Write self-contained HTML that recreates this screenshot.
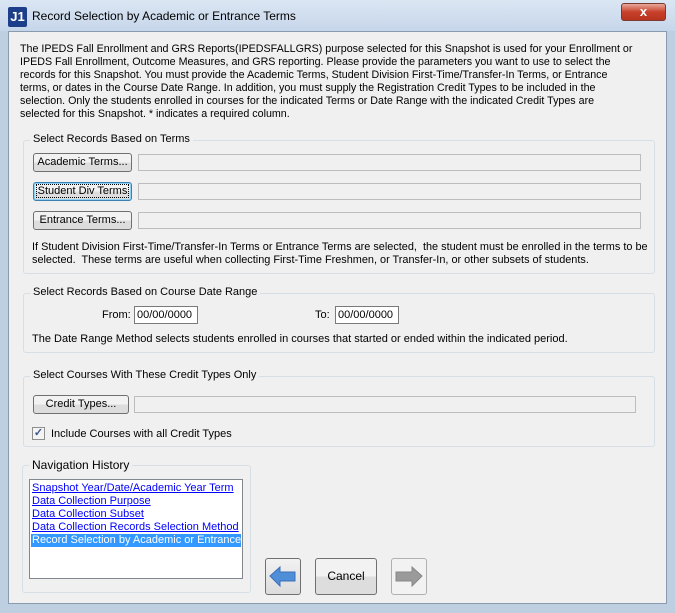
<!DOCTYPE html>
<html><head><style>
*{margin:0;padding:0;box-sizing:border-box}
body{width:675px;height:613px;background:#bfcfe2;font-family:"Liberation Sans",sans-serif;font-size:11px;color:#000;position:relative;overflow:hidden}
.abs{position:absolute}
.title{left:0;top:0;width:675px;height:31px;background:linear-gradient(#dbe6f3,#c6d6ea)}
.client{left:8px;top:31px;width:659px;height:573px;background:#f0f0f0;border:1px solid #8a9bb0}
.grp{position:absolute;border:1px solid #d5dfe5;border-radius:3px}
.grp .lg{position:absolute;top:-8px;left:6px;background:#f0f0f0;padding:0 3px;font-size:11px}
.btn{position:absolute;height:19px;border:1px solid #707070;border-radius:3px;background:linear-gradient(#f2f2f2 50%,#dddddd 50%);text-align:center;line-height:17px;font-size:11px}
.fld{position:absolute;height:17px;border:1px solid #bdbdbd;background:#f0f0f0}
.inp{position:absolute;height:18px;border:1px solid #7a7a7a;background:#fff;line-height:16px;padding-left:2px}
.t{position:absolute;white-space:nowrap;line-height:13px}
a{color:#0000ff;text-decoration:underline}
</style></head><body>
<div class="abs title"></div>
<div class="abs" style="left:8px;top:7px;width:19px;height:20px;background:#1d3f8a;border-radius:2px;color:#fff;font-weight:bold;font-size:13px;line-height:20px;text-align:center">J1</div>
<div class="t" style="left:32px;top:10px;font-size:12px">Record Selection by Academic or Entrance Terms</div>
<div class="abs" style="left:621px;top:3px;width:45px;height:18px;border:1px solid #7a3a30;border-radius:3px;background:linear-gradient(#e9a99b,#c7402a 50%,#b8341f);color:#fff;font-weight:bold;text-align:center;line-height:15px;font-size:13px">x</div>
<div class="abs client"></div>
<div class="t" style="left:20px;top:43px;font-size:10.7px">The IPEDS Fall Enrollment and GRS Reports(IPEDSFALLGRS) purpose selected for this Snapshot is used for your Enrollment or<br>IPEDS Fall Enrollment, Outcome Measures, and GRS reporting. Please provide the parameters you want to use to select the<br>records for this Snapshot. You must provide the Academic Terms, Student Division First-Time/Transfer-In Terms, or Entrance<br>terms, or dates in the Course Date Range. In addition, you must supply the Registration Credit Types to be included in the<br>selection. Only the students enrolled in courses for the indicated Terms or Date Range with the indicated Credit Types are<br>selected for this Snapshot. * indicates a required column.</div>

<div class="grp" style="left:23px;top:140px;width:632px;height:134px"><span class="lg">Select Records Based on Terms</span></div>
<div class="btn" style="left:33px;top:153px;width:99px">Academic Terms...</div>
<div class="fld" style="left:138px;top:154px;width:503px"></div>
<div class="btn" style="left:33px;top:182px;width:99px;border-color:#3c7fb1;box-shadow:inset 0 0 0 1px #8fd0f5"><span style="border:1px dotted #000;padding:0 1px">Student Div Terms</span></div>
<div class="fld" style="left:138px;top:183px;width:503px"></div>
<div class="btn" style="left:33px;top:211px;width:99px">Entrance Terms...</div>
<div class="fld" style="left:138px;top:212px;width:503px"></div>
<div class="t" style="left:32px;top:241px;font-size:10.9px">If Student Division First-Time/Transfer-In Terms or Entrance Terms are selected,&nbsp; the student must be enrolled in the terms to be<br>selected.&nbsp; These terms are useful when collecting First-Time Freshmen, or Transfer-In, or other subsets of students.</div>

<div class="grp" style="left:23px;top:293px;width:632px;height:60px"><span class="lg">Select Records Based on Course Date Range</span></div>
<div class="t" style="left:102px;top:309px">From:</div>
<div class="inp" style="left:134px;top:306px;width:64px">00/00/0000</div>
<div class="t" style="left:315px;top:309px">To:</div>
<div class="inp" style="left:335px;top:306px;width:64px">00/00/0000</div>
<div class="t" style="left:32px;top:333px">The Date Range Method selects students enrolled in courses that started or ended within the indicated period.</div>

<div class="grp" style="left:23px;top:376px;width:632px;height:71px"><span class="lg">Select Courses With These Credit Types Only</span></div>
<div class="btn" style="left:33px;top:395px;width:96px">Credit Types...</div>
<div class="fld" style="left:134px;top:396px;width:502px"></div>
<div class="abs" style="left:32px;top:427px;width:13px;height:13px;border:1px solid #8f8f8f;background:#f4f4f4;color:#3a5590;font-size:11px;font-weight:bold;line-height:11px;text-align:center">✓</div>
<div class="t" style="left:51px;top:428px">Include Courses with all Credit Types</div>

<div class="grp" style="left:22px;top:465px;width:229px;height:128px"><span class="lg" style="font-size:12px">Navigation History</span></div>
<div class="abs" style="left:29px;top:479px;width:214px;height:100px;border:1px solid #828790;background:#fff;overflow:hidden">
<div class="t" style="left:2px;top:2px;font-size:11px"><a>Snapshot Year/Date/Academic Year Term</a><br><a>Data Collection Purpose</a><br><a>Data Collection Subset</a><br><a>Data Collection Records Selection Method</a></div>
<div class="t" style="left:1px;top:54px;width:210px;background:#3399ff;color:#fff;padding-left:1px">Record Selection by Academic or Entrance Terms</div>
</div>
<div class="abs" style="left:265px;top:558px;width:36px;height:37px;border:1px solid #707070;border-radius:3px;background:linear-gradient(#f2f2f2,#dcdcdc)">
<svg width="34" height="35"><polygon points="4,17 14,8 14,13 29,13 29,22 14,22 14,27" fill="#4f8fd8" stroke="#3a70b8"/></svg></div>
<div class="btn" style="left:315px;top:558px;width:62px;height:37px;line-height:35px;font-size:12px">Cancel</div>
<div class="abs" style="left:391px;top:558px;width:36px;height:37px;border:1px solid #b0b0b0;border-radius:3px;background:#f2f2f2">
<svg width="34" height="35"><polygon points="30,17 20,8 20,13 4,13 4,22 20,22 20,27" fill="#9a9a9a" stroke="#888"/></svg></div>
</body></html>
